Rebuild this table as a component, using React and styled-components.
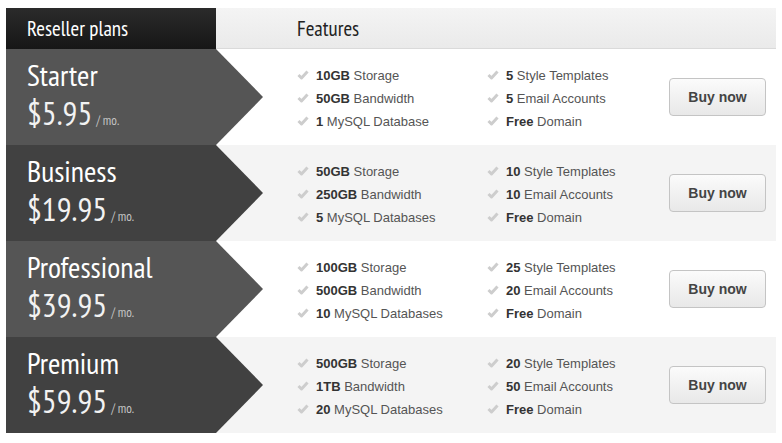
import React from 'react'
import styled, { createGlobalStyle } from 'styled-components'

const GlobalStyle = createGlobalStyle`
  body {
    margin: 0;
    background: #ffffff;
  }
`

const plans = [
  {
    name: 'Starter',
    price: '$5.95',
    features: [
      ['10GB', 'Storage'],
      ['5', 'Style Templates'],
      ['50GB', 'Bandwidth'],
      ['5', 'Email Accounts'],
      ['1', 'MySQL Database'],
      ['Free', 'Domain'],
    ],
  },
  {
    name: 'Business',
    price: '$19.95',
    features: [
      ['50GB', 'Storage'],
      ['10', 'Style Templates'],
      ['250GB', 'Bandwidth'],
      ['10', 'Email Accounts'],
      ['5', 'MySQL Databases'],
      ['Free', 'Domain'],
    ],
  },
  {
    name: 'Professional',
    price: '$39.95',
    features: [
      ['100GB', 'Storage'],
      ['25', 'Style Templates'],
      ['500GB', 'Bandwidth'],
      ['20', 'Email Accounts'],
      ['10', 'MySQL Databases'],
      ['Free', 'Domain'],
    ],
  },
  {
    name: 'Premium',
    price: '$59.95',
    features: [
      ['500GB', 'Storage'],
      ['20', 'Style Templates'],
      ['1TB', 'Bandwidth'],
      ['50', 'Email Accounts'],
      ['20', 'MySQL Databases'],
      ['Free', 'Domain'],
    ],
  },
]

const Check = () => (
  <svg width='12' height='10' viewBox='0 0 12 10'>
    <path
      d='M1.5 5 L4.5 8 L10.5 1.5'
      fill='none'
      stroke='#cdcdcd'
      strokeWidth='3'
      strokeLinejoin='round'
    />
  </svg>
)

const App = () => {
  return (
    <>
      <GlobalStyle />
      <Table>
        <Header>
          <HeaderDark>Reseller plans</HeaderDark>
          <HeaderLight>Features</HeaderLight>
        </Header>
        {plans.map((plan, index) => (
          <Row key={plan.name} odd={index % 2 === 1}>
            <Plan odd={index % 2 === 1}>
              <PlanName>{plan.name}</PlanName>
              <Price>
                {plan.price}
                <Per>/ mo.</Per>
              </Price>
            </Plan>
            <Features>
              {plan.features.map(([bold, rest]) => (
                <Feature key={rest}>
                  <Check />
                  <span>
                    <b>{bold}</b> {rest}
                  </span>
                </Feature>
              ))}
            </Features>
            <BuyButton>Buy now</BuyButton>
          </Row>
        ))}
      </Table>
    </>
  )
}

export default App

const narrow = `"PT Sans Narrow", "DejaVu Sans Condensed", sans-serif`

const Table = styled.div`
  width: 770px;
  margin: 8px 0 0 6px;
  font-family: 'Liberation Sans', Arial, sans-serif;
`

const Header = styled.div`
  display: grid;
  grid-template-columns: 210px 1fr;
  height: 41px;
  font-family: ${narrow};
  font-size: 21px;
`

const HeaderDark = styled.div`
  display: flex;
  align-items: center;
  padding-left: 21px;
  background: linear-gradient(#2b2b2b, #161616);
  color: #ffffff;
`

const HeaderLight = styled.div`
  display: flex;
  align-items: center;
  padding-left: 81px;
  background: linear-gradient(#f4f4f4, #eaeaea);
  border-bottom: 1px solid #dadada;
  color: #222222;
`

const Row = styled.div`
  display: grid;
  grid-template-columns: 210px 1fr auto;
  align-items: center;
  height: 96px;
  background: ${(props) => (props.odd ? '#f4f4f4' : '#ffffff')};
`

const Plan = styled.div`
  position: relative;
  height: 100%;
  box-sizing: border-box;
  padding: 9px 0 0 21px;
  background: ${(props) => (props.odd ? '#414141' : '#555555')};
  color: #ffffff;
  font-family: ${narrow};
  white-space: nowrap;

  &::after {
    content: '';
    position: absolute;
    left: 100%;
    top: 0;
    border-left: 47px solid ${(props) => (props.odd ? '#414141' : '#555555')};
    border-top: 48px solid transparent;
    border-bottom: 48px solid transparent;
  }
`

const PlanName = styled.div`
  font-size: 30px;
  line-height: 34px;
`

const Price = styled.div`
  margin-top: 2px;
  font-size: 33px;
  line-height: 38px;
  color: #f2f2f2;
`

const Per = styled.span`
  margin-left: 4px;
  font-size: 13px;
  color: #c4c4c4;
`

const Features = styled.div`
  display: grid;
  grid-template-columns: 190px 180px;
  grid-auto-rows: 23px;
  padding: 2px 0 0 81px;
`

const Feature = styled.div`
  display: flex;
  align-items: center;
  gap: 7px;
  font-size: 13px;
  color: #555555;

  b {
    color: #333333;
  }
`

const BuyButton = styled.button`
  width: 97px;
  height: 38px;
  margin-right: 10px;
  border: 1px solid #c4c4c4;
  border-radius: 4px;
  background: linear-gradient(#fbfbfb, #e8e8e8);
  color: #444444;
  font-family: 'Liberation Sans', Arial, sans-serif;
  font-size: 14px;
  font-weight: bold;
  cursor: pointer;
`
